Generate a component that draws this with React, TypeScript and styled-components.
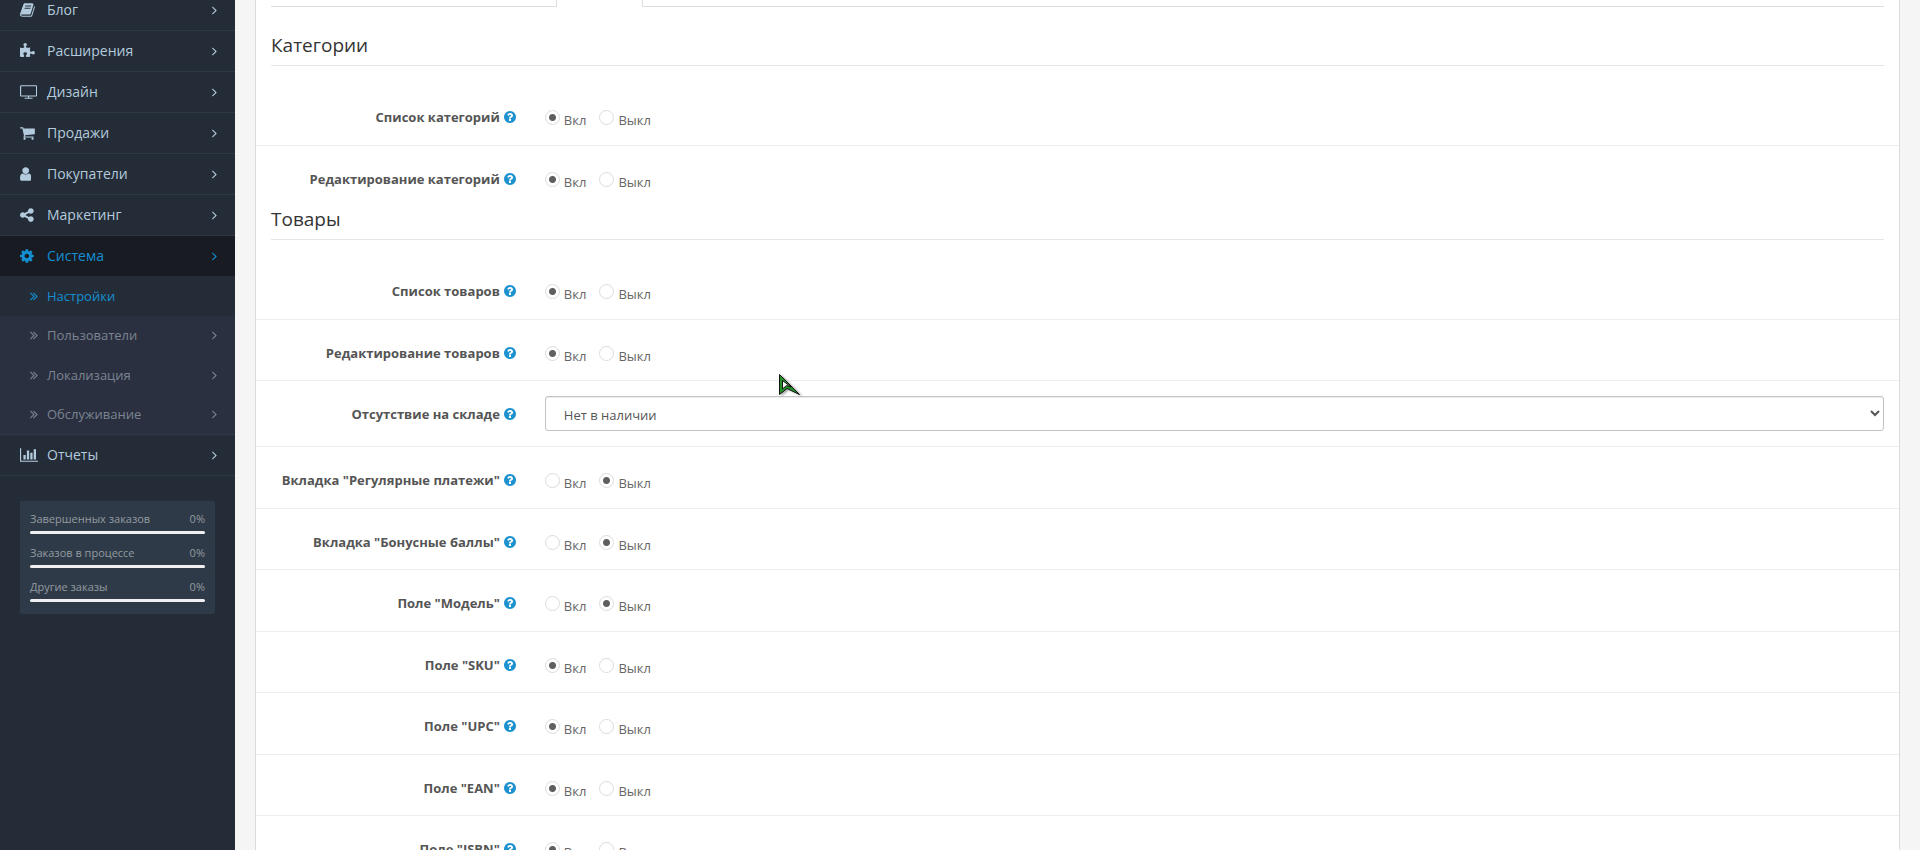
import React from "react";
import styled, { createGlobalStyle } from "styled-components";

const GlobalStyle = createGlobalStyle`
  *, *::before, *::after { box-sizing: border-box; }
  html, body { margin: 0; height: 100%; }
  body {
    overflow: hidden;
    background: #f5f5f5;
    color: #666;
    font-family: "Open Sans", "Noto Sans", sans-serif;
    font-size: 13px;
    line-height: 1.5;
  }
  ul { list-style: none; margin: 0; padding: 0; }
`;

const Shell = styled.div`
  display: flex;
  height: 100vh;
  overflow: hidden;
`;

const Sidebar = styled.aside`
  flex: 0 0 235px;
  background: #242c37;
`;

const Menu = styled.ul`
  && { margin-top: -10px; }
`;

const MenuItem = styled.li`
  border-bottom: 1px solid #2d3a45;
`;

const MenuLink = styled.a<{ $active?: boolean }>`
  display: flex;
  align-items: center;
  height: 40px;
  padding: 0 18px 0 20px;
  background: ${(p) => (p.$active ? "#181b22" : "transparent")};
  color: ${(p) => (p.$active ? "#148fd3" : "#b3cbdd")};
  font-size: 14px;
  line-height: 20px;
  text-decoration: none;
`;

const IconSlot = styled.span`
  display: flex;
  flex: 0 0 27px;
`;

const LinkText = styled.span`
  flex: 1;
`;

const SubMenu = styled.ul`
  display: grid;
  grid-auto-rows: 1fr;
  height: 158px;
  background: #2a3040;
`;

const SubLink = styled.a<{ $active?: boolean }>`
  display: flex;
  align-items: center;
  height: 100%;
  padding: 0 18px 0 30px;
  background: ${(p) => (p.$active ? "#242c37" : "transparent")};
  color: ${(p) => (p.$active ? "#148fd3" : "#7b8491")};
  font-size: 13px;
  line-height: 20px;
  text-decoration: none;
`;

const SubIconSlot = styled(IconSlot)`
  flex-basis: 17px;
`;

const Stats = styled.ul`
  && { margin: 25px 20px 0; }
  padding: 5px 0 6px;
  border-radius: 2px;
  background: #2f3a48;
`;

const Stat = styled.li`
  padding: 4px 10px 5px;
  border-bottom: 1px solid #32383f;
  color: #939ba1;
  font-size: 11px;
  line-height: 17px;

  &:last-child { border-bottom-color: transparent; }
`;

const StatHead = styled.div`
  display: flex;
  justify-content: space-between;
`;

const StatBar = styled.div`
  height: 3px;
  margin-top: 4px;
  border-radius: 2px;
  background: #f0f0f2;
`;

const Main = styled.main`
  flex: 1;
  min-width: 0;
  padding: 0 20px;
`;

const Panel = styled.div`
  border: solid #dcdcdc;
  border-width: 0 1px;
  background: #fff;
`;

const Tabs = styled.div`
  display: flex;
  height: 7px;
  margin: 0 15px 25px;
`;

const TabEdge = styled.div<{ $grow?: boolean }>`
  flex: ${(p) => (p.$grow ? "1" : "0 0 285px")};
  border-bottom: 1px solid #ddd;
`;

const ActiveTab = styled.div`
  flex: 0 0 87px;
  border: solid #ddd;
  border-width: 0 1px;
`;

const Section = styled.section``;

const SectionTitle = styled.h2`
  margin: 0 15px 17px;
  padding-bottom: 6px;
  border-bottom: 1px solid #e5e5e5;
  color: #333;
  font-size: 19px;
  font-weight: 400;
  line-height: 27px;
`;

const Row = styled.div`
  display: flex;
  padding: 15px 0 14px;
  border-top: 1px solid #ededed;

  ${SectionTitle} + & { border-top-color: transparent; }
`;

const LabelCell = styled.div`
  display: flex;
  flex: 0 0 calc(100% / 6);
  justify-content: flex-end;
  align-items: flex-start;
  padding: 9px 14px 0 15px;
`;

const FieldLabel = styled.label`
  color: #555;
  font-weight: 700;
  white-space: nowrap;
`;

const Help = styled.span`
  display: flex;
  margin: 2px 0 0 4px;
  color: #1e91cf;
`;

const FieldCell = styled.div`
  flex: 1;
  min-width: 0;
  padding: 0 15px;
`;

const RadioGroup = styled.div`
  display: flex;
  gap: 13px;
  padding-top: 12px;
`;

const RadioLabel = styled.label`
  display: flex;
  align-items: flex-start;
  gap: 4px;
`;

const Radio = styled.input`
  appearance: none;
  flex: 0 0 15px;
  height: 15px;
  margin: -1px 0 0;
  border: 1px solid #dcdcdc;
  border-radius: 50%;
  background: #fff;

  &:checked {
    background: radial-gradient(circle, #5f5f5f 3px, #fff 4px);
  }
`;

const Select = styled.select`
  display: block;
  width: 100%;
  height: 35px;
  margin-bottom: 1px;
  padding: 8px 0 8px 14px;
  border: 1px solid #c4c4c4;
  border-radius: 3px;
  background: #fff;
  box-shadow: inset 0 1px 1px rgba(0, 0, 0, 0.08);
  color: #555;
  font-family: inherit;
  font-size: 13px;
`;

const Pointer = styled.svg`
  position: absolute;
  left: 778px;
  top: 373px;
  filter: drop-shadow(2px 1px 1px rgba(0, 0, 0, 0.35));
  pointer-events: none;
`;

type Glyph = { x: number; w: number; d: string };

const glyphs: Record<string, Glyph> = {
  book: { x: 64, w: 1664, d: "M1703 478q40 57 18 129l-275 906q-19 64-76.5 107.5t-122.5 43.5h-923q-77 0-148.5-53.5t-99.5-131.5q-24-67-2-127 0-4 3-27t4-37q1-8-3-21.5t-3-19.5q2-11 8-21t16.5-23.5 16.5-23.5q23-38 45-91.5t30-91.5q3-10 .5-30t-.5-28q3-11 17-28t17-23q21-36 42-92t25-90q1-9-2.5-32t.5-28q4-13 22-30.5t22-22.5q19-26 42.5-84.5t27.5-96.5q1-8-3-25.5t-2-26.5q2-8 9-18t18-23 17-21q8-12 16.5-30.5t15-35 16-36 19.5-32 26.5-23.5 36-11.5 47.5 5.5l-1 3q38-9 51-9h761q74 0 114 56t18 130l-274 906q-36 119-71.5 153.5t-128.5 34.5h-869q-27 0-38 15-11 16-1 43 24 70 144 70h923q29 0 56-15.5t35-41.5l300-987q7-22 5-57 38 15 59 43zm-1064 2q-4 13 2 22.5t20 9.5h608q13 0 25.5-9.5t16.5-22.5l21-64q4-13-2-22.5t-20-9.5h-608q-13 0-25.5 9.5t-16.5 22.5zm-83 256q-4 13 2 22.5t20 9.5h608q13 0 25.5-9.5t16.5-22.5l21-64q4-13-2-22.5t-20-9.5h-608q-13 0-25.5 9.5t-16.5 22.5z" },
  puzzle: { x: 64, w: 1664, d: "M1728 1098q0 81-44.5 135t-123.5 54q-41 0-77.5-17.5t-59-38-56.5-38-71-17.5q-110 0-110 124 0 39 16 115t15 115v5q-22 0-33 1-34 3-97.5 11.5t-115.5 13.5-98 5q-61 0-103-26.5t-42-83.5q0-37 17.5-71t38-56.5 38-59 17.5-77.5q0-79-54-123.5t-135-44.5q-84 0-143 45.5t-59 127.5q0 43 15 83t33.5 64.5 33.5 53 15 50.5q0 45-46 89-37 35-117 35-95 0-245-24-9-2-27.5-4t-27.5-4l-13-2q-1 0-3-1-2 0-2-1v-1024q2 1 17.5 3.5t34 5 21.5 3.5q150 24 245 24 80 0 117-35 46-44 46-89 0-22-15-50.5t-33.5-53-33.5-64.5-15-83q0-82 59-127.5t144-45.5q80 0 134 44.5t54 123.5q0 41-17.5 77.5t-38 59-38 56.5-17.5 71q0 57 42 83.5t103 26.5q64 0 180-15t163-17v2q-1 2-3.5 17.5t-5 34-3.5 21.5q-24 150-24 245 0 80 35 117 44 46 89 46 22 0 50.5-15t53-33.5 64.5-33.5 83-15q82 0 127.5 59t45.5 143z" },
  television: { x: 0, w: 1920, d: "M1792 1248v-960q0-13-9.5-22.5t-22.5-9.5h-1600q-13 0-22.5 9.5t-9.5 22.5v960q0 13 9.5 22.5t22.5 9.5h1600q13 0 22.5-9.5t9.5-22.5zm128-960v960q0 66-47 113t-113 47h-736v128h352q14 0 23 9t9 23v64q0 14-9 23t-23 9h-832q-14 0-23-9t-9-23v-64q0-14 9-23t23-9h352v-128h-736q-66 0-113-47t-47-113v-960q0-66 47-113t113-47h1600q66 0 113 47t47 113z" },
  cart: { x: 64, w: 1664, d: "M704 1536q0 52-38 90t-90 38-90-38-38-90 38-90 90-38 90 38 38 90zm896 0q0 52-38 90t-90 38-90-38-38-90 38-90 90-38 90 38 38 90zm128-1088v512q0 24-16.5 42.5t-40.5 21.5l-1044 122q13 60 13 70 0 16-24 64h920q26 0 45 19t19 45-19 45-45 19h-1024q-26 0-45-19t-19-45q0-11 8-31.5t16-36 21.5-40 15.5-29.5l-177-823h-204q-26 0-45-19t-19-45 19-45 45-19h256q16 0 28.5 6.5t19.5 15.5 13 24.5 8 26 5.5 29.5 4.5 26h1201q26 0 45 19t19 45z" },
  user: { x: 256, w: 1280, d: "M1536 1399q0 109-62.5 187t-150.5 78h-854q-88 0-150.5-78t-62.5-187q0-85 8.5-160.5t31.5-152 58.5-131 94-89 134.5-34.5q131 128 313 128t313-128q76 0 134.5 34.5t94 89 58.5 131 31.5 152 8.5 160.5zm-256-887q0 159-112.5 271.5t-271.5 112.5-271.5-112.5-112.5-271.5 112.5-271.5 271.5-112.5 271.5 112.5 112.5 271.5z" },
  share: { x: 128, w: 1536, d: "M1344 1024q133 0 226.5 93.5t93.5 226.5-93.5 226.5-226.5 93.5-226.5-93.5-93.5-226.5q0-12 2-34l-360-180q-92 86-218 86-133 0-226.5-93.5t-93.5-226.5 93.5-226.5 226.5-93.5q126 0 218 86l360-180q-2-22-2-34 0-133 93.5-226.5t226.5-93.5 226.5 93.5 93.5 226.5-93.5 226.5-226.5 93.5q-126 0-218-86l-360 180q2 22 2 34t-2 34l360 180q92-86 218-86z" },
  cog: { x: 128, w: 1536, d: "M1152 896q0-106-75-181t-181-75-181 75-75 181 75 181 181 75 181-75 75-181zm512-109v222q0 12-8 23t-20 13l-185 28q-19 54-39 91 35 50 107 138 10 12 10 25t-9 23q-27 37-99 108t-94 71q-12 0-26-9l-138-108q-44 23-91 38-16 136-29 186-7 28-36 28h-222q-14 0-24.5-8.5t-11.5-21.5l-28-184q-49-16-90-37l-141 107q-10 9-25 9-14 0-25-11-126-114-165-168-7-10-7-23 0-12 8-23 15-21 51-66.5t54-70.5q-27-50-41-99l-183-27q-13-2-21-12.5t-8-23.5v-222q0-12 8-23t19-13l186-28q14-46 39-92-40-57-107-138-10-12-10-24 0-10 9-23 26-36 98.5-107.5t94.5-71.5q13 0 26 10l138 107q44-23 91-38 16-136 29-186 7-28 36-28h222q14 0 24.5 8.5t11.5 21.5l28 184q49 16 90 37l142-107q9-9 24-9 13 0 25 10 129 119 165 170 7 8 7 22 0 12-8 23-15 21-51 66.5t-54 70.5q26 50 41 98l183 28q13 2 21 12.5t8 23.5z" },
  chart: { x: 0, w: 2048, d: "M640 896v512h-256v-512h256zm384-512v1024h-256v-1024h256zm1024 1152v128h-2048v-1536h128v1408h1920zm-640-896v768h-256v-768h256zm384-384v1152h-256v-1152h256z" },
  angle: { x: 576, w: 640, d: "M1171 960q0 13-10 23l-466 466q-10 10-23 10t-23-10l-50-50q-10-10-10-23t10-23l393-393-393-393q-10-10-10-23t10-23l50-50q10-10 23-10t23 10l466 466q10 10 10 23z" },
  angles: { x: 576, w: 1024, d: "M1171 960q0 13-10 23l-466 466q-10 10-23 10t-23-10l-50-50q-10-10-10-23t10-23l393-393-393-393q-10-10-10-23t10-23l50-50q10-10 23-10t23 10l466 466q10 10 10 23zM1555 960q0 13-10 23l-466 466q-10 10-23 10t-23-10l-50-50q-10-10-10-23t10-23l393-393-393-393q-10-10-10-23t10-23l50-50q10-10 23-10t23 10l466 466q10 10 10 23z" },
  question: { x: 128, w: 1536, d: "M1024 1376v-192q0-14-9-23t-23-9h-192q-14 0-23 9t-9 23v192q0 14 9 23t23 9h192q14 0 23-9t9-23zm256-672q0-88-55.5-163t-138.5-116-170-41q-243 0-371 213-15 24 8 42l132 100q7 6 19 6 16 0 25-12 53-68 86-92 34-24 86-24 48 0 85.5 26t37.5 59q0 38-20 61t-68 45q-63 28-115.5 86.5t-52.5 125.5v36q0 14 9 23t23 9h192q14 0 23-9t9-23q0-19 21.5-49.5t54.5-49.5q32-18 49-28.5t46-35 44.5-48 28-60.5 12.5-81zm384 192q0 209-103 385.5t-279.5 279.5-385.5 103-385.5-103-279.5-279.5-103-385.5 103-385.5 279.5-279.5 385.5-103 385.5 103 279.5 279.5 103 385.5z" },
};

function Icon({ name, size }: { name: string; size: number }) {
  const g = glyphs[name];
  return (
    <svg width={(g.w * size) / 1792} height={size} viewBox={`${g.x} 0 ${g.w} 1792`} fill="currentColor" aria-hidden="true">
      <path d={g.d} />
    </svg>
  );
}

type Entry = { text: string; icon: string; children?: { text: string; active?: boolean }[] };

const menu: Entry[] = [
  { text: "Блог", icon: "book" },
  { text: "Расширения", icon: "puzzle" },
  { text: "Дизайн", icon: "television" },
  { text: "Продажи", icon: "cart" },
  { text: "Покупатели", icon: "user" },
  { text: "Маркетинг", icon: "share" },
  {
    text: "Система",
    icon: "cog",
    children: [
      { text: "Настройки", active: true },
      { text: "Пользователи" },
      { text: "Локализация" },
      { text: "Обслуживание" },
    ],
  },
  { text: "Отчеты", icon: "chart" },
];

const stats = ["Завершенных заказов", "Заказов в процессе", "Другие заказы"];

type Field = { id: string; text: string; kind?: "select"; on?: boolean };

const sections: { title: string; fields: Field[] }[] = [
  {
    title: "Категории",
    fields: [
      { id: "category-list", text: "Список категорий", on: true },
      { id: "category-edit", text: "Редактирование категорий", on: true },
    ],
  },
  {
    title: "Товары",
    fields: [
      { id: "product-list", text: "Список товаров", on: true },
      { id: "product-edit", text: "Редактирование товаров", on: true },
      { id: "stock", text: "Отсутствие на складе", kind: "select" },
      { id: "recurring", text: 'Вкладка "Регулярные платежи"', on: false },
      { id: "reward", text: 'Вкладка "Бонусные баллы"', on: false },
      { id: "model", text: 'Поле "Модель"', on: false },
      { id: "sku", text: 'Поле "SKU"', on: true },
      { id: "upc", text: 'Поле "UPC"', on: true },
      { id: "ean", text: 'Поле "EAN"', on: true },
      { id: "isbn", text: 'Поле "ISBN"', on: true },
    ],
  },
];

function FieldRow({ field }: { field: Field }) {
  return (
    <Row>
      <LabelCell>
        <FieldLabel id={`${field.id}-label`} htmlFor={field.kind === "select" ? field.id : `${field.id}-on`}>
          {field.text}
        </FieldLabel>
        <Help>
          <Icon name="question" size={14} />
        </Help>
      </LabelCell>
      <FieldCell>
        {field.kind === "select" ? (
          <Select id={field.id}>
            <option>Нет в наличии</option>
          </Select>
        ) : (
          <RadioGroup role="radiogroup" aria-labelledby={`${field.id}-label`}>
            <RadioLabel>
              <Radio type="radio" id={`${field.id}-on`} name={field.id} defaultChecked={field.on} />
              <span>Вкл</span>
            </RadioLabel>
            <RadioLabel>
              <Radio type="radio" name={field.id} defaultChecked={!field.on} />
              <span>Выкл</span>
            </RadioLabel>
          </RadioGroup>
        )}
      </FieldCell>
    </Row>
  );
}

export default function App() {
  return (
    <>
      <GlobalStyle />
      <Shell>
        <Sidebar>
          <nav>
            <Menu>
              {menu.map((entry) => (
                <MenuItem key={entry.text}>
                  <MenuLink href="#" $active={!!entry.children}>
                    <IconSlot>
                      <Icon name={entry.icon} size={16} />
                    </IconSlot>
                    <LinkText>{entry.text}</LinkText>
                    <Icon name="angle" size={14} />
                  </MenuLink>
                  {entry.children && (
                    <SubMenu>
                      {entry.children.map((sub) => (
                        <li key={sub.text}>
                          <SubLink href="#" $active={sub.active}>
                            <SubIconSlot>
                              <Icon name="angles" size={14} />
                            </SubIconSlot>
                            <LinkText>{sub.text}</LinkText>
                            {!sub.active && <Icon name="angle" size={14} />}
                          </SubLink>
                        </li>
                      ))}
                    </SubMenu>
                  )}
                </MenuItem>
              ))}
            </Menu>
          </nav>
          <Stats>
            {stats.map((text) => (
              <Stat key={text}>
                <StatHead>
                  <span>{text}</span>
                  <span>0%</span>
                </StatHead>
                <StatBar />
              </Stat>
            ))}
          </Stats>
        </Sidebar>
        <Main>
          <Panel>
            <Tabs>
              <TabEdge />
              <ActiveTab />
              <TabEdge $grow />
            </Tabs>
            {sections.map((section) => (
              <Section key={section.title}>
                <SectionTitle>{section.title}</SectionTitle>
                {section.fields.map((field) => (
                  <FieldRow key={field.id} field={field} />
                ))}
              </Section>
            ))}
          </Panel>
        </Main>
      </Shell>
      <Pointer width="24" height="24" viewBox="0 0 24 24" aria-hidden="true">
        <path d="M1.5 1.5V21.5L9 15.5L21.5 21.5Z" fill="#23902a" stroke="#111" />
        <path d="M4.5 7.5V16L8.5 12.5L13 14Z" fill="#fff" stroke="#111" />
      </Pointer>
    </>
  );
}
